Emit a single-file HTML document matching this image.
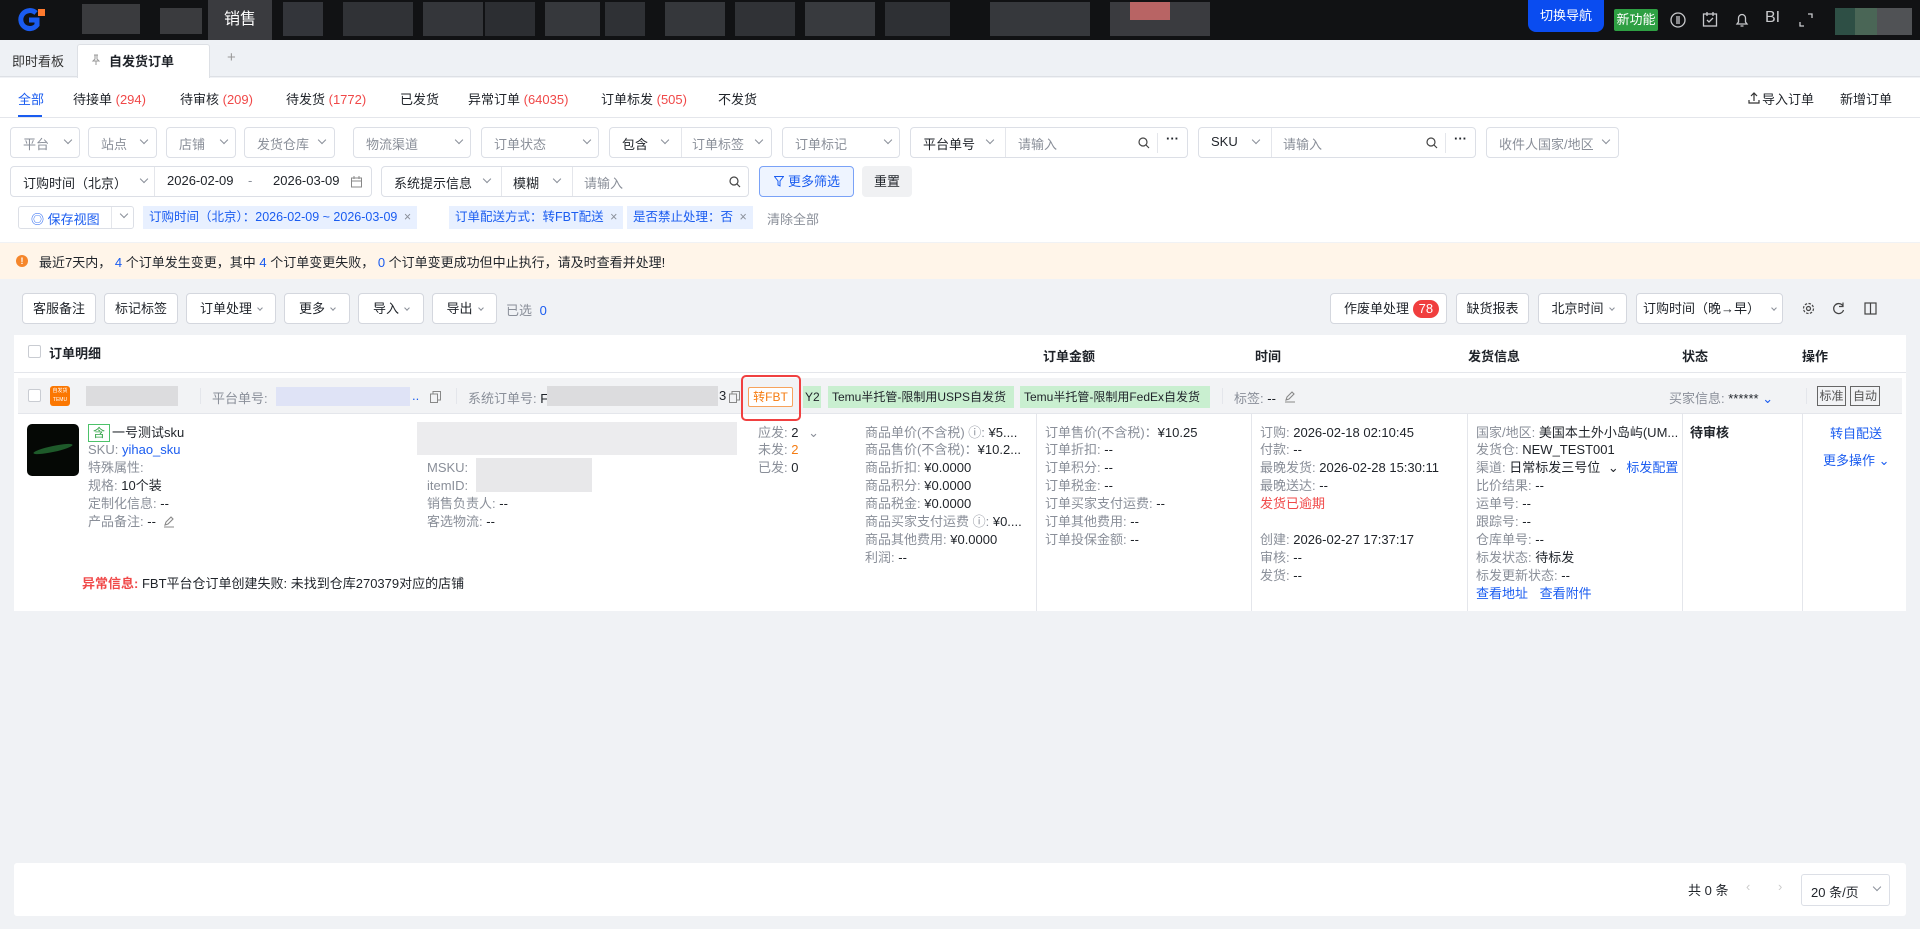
<!DOCTYPE html>
<html><head><meta charset="utf-8">
<style>
*{box-sizing:border-box;margin:0;padding:0}
body{width:1920px;height:929px;overflow:hidden;background:#f0f2f5;font-family:"Liberation Sans","Noto Sans CJK SC",sans-serif;font-size:13px;color:#1f2329;position:relative}
.a{position:absolute;white-space:nowrap}
.box{position:absolute;border:1px solid #dcdfe6;border-radius:4px;background:#fff;height:31px}
.ph{color:#8a8f99}
.g{color:#8a8f99}
.b{color:#1a5cf0}
.r{color:#f04848}
.btn{position:absolute;border:1px solid #d4d7de;border-radius:4px;background:#fff;height:31px;line-height:29px;text-align:center;font-size:13px;white-space:nowrap}
.tag{position:absolute;background:#e8f0ff;color:#1a5cf0;height:23px;line-height:23px;padding:0 6px;font-size:12.5px;white-space:nowrap}
.chev{display:inline-block;width:6px;height:6px;border-right:1.2px solid #8a8f99;border-bottom:1.2px solid #8a8f99;transform:rotate(45deg);margin-left:6px;position:relative;top:-3px}
.sep{position:absolute;width:1px;background:#e4e6eb}
.blur{position:absolute;background:#d8d9dc}
.gtag{position:absolute;background:#c9efd0;color:#1f2329;height:22px;line-height:22px;padding:0 4px;font-size:12px;white-space:nowrap;overflow:hidden}
.ln{position:absolute;line-height:18px;font-size:13px;white-space:nowrap}
.mg{position:absolute}
</style></head><body>
<!-- top bar -->
<div class="a" style="left:0;top:0;width:1920px;height:40px;background:#111214"></div>
<svg class="a" style="left:18px;top:8px" width="28" height="24" viewBox="0 0 28 24"><path d="M18 5 A9 9 0 1 0 19 17 L19 12 L11 12" fill="none" stroke="#1a5cf0" stroke-width="5"/><rect x="20" y="1" width="7" height="7" fill="#ff7a2e"/></svg>
<div class="blur" style="left:82px;top:4px;width:58px;height:30px;background:#3a3b3e"></div>
<div class="blur" style="left:160px;top:8px;width:42px;height:26px;background:#3a3b3e"></div>
<div class="a" style="left:208px;top:0;width:64px;height:40px;background:#3a3b3f;color:#fff;font-size:16px;line-height:40px;text-align:center">销售</div>
<div class="blur" style="left:283px;top:2px;width:40px;height:34px;background:#33353a"></div>
<div class="blur" style="left:343px;top:2px;width:70px;height:34px;background:#303236"></div>
<div class="blur" style="left:423px;top:2px;width:60px;height:34px;background:#34363a"></div>
<div class="blur" style="left:485px;top:2px;width:50px;height:34px;background:#2c2e32"></div>
<div class="blur" style="left:545px;top:2px;width:55px;height:34px;background:#36383c"></div>
<div class="blur" style="left:605px;top:2px;width:40px;height:34px;background:#2f3135"></div>
<div class="blur" style="left:665px;top:2px;width:60px;height:34px;background:#35373b"></div>
<div class="blur" style="left:735px;top:2px;width:60px;height:34px;background:#303236"></div>
<div class="blur" style="left:805px;top:2px;width:70px;height:34px;background:#383a3e"></div>
<div class="blur" style="left:885px;top:2px;width:65px;height:34px;background:#2e3034"></div>
<div class="blur" style="left:990px;top:2px;width:100px;height:34px;background:#36383c"></div>
<div class="blur" style="left:1110px;top:2px;width:100px;height:34px;background:#3a3b3f"></div>
<div class="blur" style="left:1130px;top:2px;width:40px;height:18px;background:#b86464"></div>
<div class="a" style="left:1528px;top:0;width:76px;height:32px;background:#0a4cf0;color:#fff;border-radius:0 0 8px 8px;text-align:center;line-height:32px;font-size:13px">切换导航</div>
<div class="a" style="left:1614px;top:9px;width:44px;height:22px;background:#2ea043;color:#fff;border-radius:2px;text-align:center;line-height:22px;font-size:13px">新功能</div>
<svg class="a" style="left:1670px;top:12px" width="16" height="16"><circle cx="8" cy="8" r="7" fill="none" stroke="#c8c9cc" stroke-width="1.3"/><path d="M7 4v8M9 4v8" stroke="#c8c9cc" stroke-width="1.3"/></svg>
<svg class="a" style="left:1702px;top:11px" width="16" height="17"><rect x="1.5" y="3" width="13" height="12" fill="none" stroke="#c8c9cc" stroke-width="1.3"/><path d="M5 1v4M11 1v4M5 9l2 2 4-4" fill="none" stroke="#c8c9cc" stroke-width="1.3"/></svg>
<svg class="a" style="left:1734px;top:11px" width="16" height="17"><path d="M3 13h10l-1.5-2V7a3.5 3.5 0 0 0-7 0v4zM6.5 15h3" fill="none" stroke="#c8c9cc" stroke-width="1.3"/></svg>
<div class="a" style="left:1765px;top:9px;color:#c8c9cc;font-size:16px">BI</div>
<svg class="a" style="left:1799px;top:13px" width="14" height="14"><path d="M9 1h4v4M5 13H1V9" fill="none" stroke="#c8c9cc" stroke-width="1.3"/></svg>
<div class="blur" style="left:1835px;top:8px;width:20px;height:27px;background:#2e4f45"></div>
<div class="blur" style="left:1855px;top:8px;width:22px;height:27px;background:#4a6656"></div>
<div class="blur" style="left:1877px;top:8px;width:35px;height:27px;background:#505255"></div>
<!-- tab bar -->
<div class="a" style="left:0;top:40px;width:1920px;height:37px;background:#eef1f5;border-bottom:1px solid #dde0e5"></div>
<div class="a" style="left:12px;top:51px;font-size:13px;color:#333">即时看板</div>
<div class="a" style="left:77px;top:44px;width:133px;height:34px;background:#fff;border:1px solid #dde0e5;border-bottom:none;border-radius:3px 3px 0 0"></div>
<svg class="a" style="left:91px;top:54px" width="10" height="12"><path d="M3 1h4M4 1v4L2 7h6L6 5V1M5 7v4" fill="none" stroke="#999" stroke-width="1"/></svg>
<div class="a" style="left:109px;top:51px;font-size:13px;font-weight:bold">自发货订单</div>
<div class="a" style="left:227px;top:49px;font-size:15px;color:#999">+</div>
<!-- status tabs -->
<div class="a" style="left:0;top:78px;width:1920px;height:40px;background:#fff;border-bottom:1px solid #e4e6eb"></div>
<div class="a" style="left:18px;top:89px;color:#1a5cf0">全部</div>
<div class="a" style="left:18px;top:115px;width:24px;height:2px;background:#1a5cf0"></div>
<div class="a" style="left:73px;top:89px">待接单 <span class="r">(294)</span></div>
<div class="a" style="left:180px;top:89px">待审核 <span class="r">(209)</span></div>
<div class="a" style="left:286px;top:89px">待发货 <span class="r">(1772)</span></div>
<div class="a" style="left:400px;top:89px">已发货</div>
<div class="a" style="left:468px;top:89px">异常订单 <span class="r">(64035)</span></div>
<div class="a" style="left:601px;top:89px">订单标发 <span class="r">(505)</span></div>
<div class="a" style="left:718px;top:89px">不发货</div>
<svg class="a" style="left:1748px;top:91px" width="12" height="13"><path d="M6 10V2M3 5l3-3 3 3M1 9v3h10V9" fill="none" stroke="#333" stroke-width="1.2"/></svg>
<div class="a" style="left:1762px;top:89px">导入订单</div>
<div class="a" style="left:1840px;top:89px">新增订单</div>
<!-- filter area bg -->
<div class="a" style="left:0;top:118px;width:1920px;height:124px;background:#fff"></div>
<div class="box" style="left:10px;top:127px;width:70px"><span class="a ph" style="left:12px;top:6px">平台</span><span class="a" style="left:48px;top:6px"><i class="chev"></i></span></div>
<div class="box" style="left:88px;top:127px;width:69px"><span class="a ph" style="left:12px;top:6px">站点</span><span class="a" style="left:46px;top:6px"><i class="chev"></i></span></div>
<div class="box" style="left:166px;top:127px;width:70px"><span class="a ph" style="left:12px;top:6px">店铺</span><span class="a" style="left:48px;top:6px"><i class="chev"></i></span></div>
<div class="box" style="left:244px;top:127px;width:91px"><span class="a ph" style="left:12px;top:6px">发货仓库</span><span class="a" style="left:68px;top:6px"><i class="chev"></i></span></div>
<div class="box" style="left:353px;top:127px;width:118px"><span class="a ph" style="left:12px;top:6px">物流渠道</span><span class="a" style="left:96px;top:6px"><i class="chev"></i></span></div>
<div class="box" style="left:481px;top:127px;width:118px"><span class="a ph" style="left:12px;top:6px">订单状态</span><span class="a" style="left:96px;top:6px"><i class="chev"></i></span></div>
<div class="box" style="left:609px;top:127px;width:163px"><span class="a" style="left:12px;top:6px">包含</span><span class="a" style="left:46px;top:6px"><i class="chev"></i></span><div class="sep" style="left:71px;top:0;height:29px"></div><span class="a ph" style="left:82px;top:6px">订单标签</span><span class="a" style="left:140px;top:6px"><i class="chev"></i></span></div>
<div class="box" style="left:782px;top:127px;width:118px"><span class="a ph" style="left:12px;top:6px">订单标记</span><span class="a" style="left:96px;top:6px"><i class="chev"></i></span></div>
<div class="box" style="left:910px;top:127px;width:278px"><span class="a" style="left:12px;top:6px">平台单号</span><span class="a" style="left:70px;top:6px"><i class="chev"></i></span><div class="sep" style="left:94px;top:0;height:29px"></div><span class="a ph" style="left:107px;top:6px">请输入</span><svg class="mg" style="left:227px;top:9px" width="12" height="12"><circle cx="5" cy="5" r="4" fill="none" stroke="#444" stroke-width="1.2"/><path d="M8 8l3 3" stroke="#444" stroke-width="1.2"/></svg><div class="sep" style="left:246px;top:5px;height:20px"></div><span class="a" style="left:255px;top:3px;font-weight:bold">···</span></div>
<div class="box" style="left:1198px;top:127px;width:278px"><span class="a" style="left:12px;top:6px">SKU</span><span class="a" style="left:48px;top:6px"><i class="chev"></i></span><div class="sep" style="left:72px;top:0;height:29px"></div><span class="a ph" style="left:84px;top:6px">请输入</span><svg class="mg" style="left:227px;top:9px" width="12" height="12"><circle cx="5" cy="5" r="4" fill="none" stroke="#444" stroke-width="1.2"/><path d="M8 8l3 3" stroke="#444" stroke-width="1.2"/></svg><div class="sep" style="left:246px;top:5px;height:20px"></div><span class="a" style="left:255px;top:3px;font-weight:bold">···</span></div>
<div class="box" style="left:1486px;top:127px;width:133px"><span class="a ph" style="left:12px;top:6px">收件人国家/地区</span><span class="a" style="left:110px;top:6px"><i class="chev"></i></span></div>
<!-- row 2 -->
<div class="box" style="left:10px;top:166px;width:362px"><span class="a" style="left:12px;top:6px">订购时间（北京）</span><span class="a" style="left:124px;top:6px"><i class="chev"></i></span><div class="sep" style="left:143px;top:0;height:29px"></div><span class="a" style="left:156px;top:6px">2026-02-09</span><span class="a g" style="left:237px;top:6px">-</span><span class="a" style="left:262px;top:6px">2026-03-09</span><svg class="mg" style="left:340px;top:9px" width="11" height="12"><rect x="0.5" y="2" width="10" height="9" fill="none" stroke="#888"/><path d="M3 0v3M8 0v3M0 5h11" stroke="#888"/></svg></div>
<div class="box" style="left:381px;top:166px;width:368px"><span class="a" style="left:12px;top:6px">系统提示信息</span><span class="a" style="left:96px;top:6px"><i class="chev"></i></span><div class="sep" style="left:119px;top:0;height:29px"></div><span class="a" style="left:131px;top:6px">模糊</span><span class="a" style="left:166px;top:6px"><i class="chev"></i></span><div class="sep" style="left:190px;top:0;height:29px"></div><span class="a ph" style="left:202px;top:6px">请输入</span><svg class="mg" style="left:347px;top:9px" width="12" height="12"><circle cx="5" cy="5" r="4" fill="none" stroke="#444" stroke-width="1.2"/><path d="M8 8l3 3" stroke="#444" stroke-width="1.2"/></svg></div>
<div class="a" style="left:759px;top:166px;width:95px;height:31px;border:1px solid #7aa2f7;background:#eef4ff;border-radius:4px;color:#1a5cf0;line-height:29px;padding-left:14px"><svg style="vertical-align:-1px;margin-right:4px" width="10" height="11"><path d="M0.5 0.5h9L6 5v5L4 9V5z" fill="none" stroke="#1a5cf0"/></svg>更多筛选</div>
<div class="a" style="left:862px;top:166px;width:50px;height:31px;background:#f0f1f3;border-radius:4px;line-height:31px;text-align:center">重置</div>
<!-- row 3 -->
<div class="a" style="left:18px;top:206px;width:116px;height:23px;border:1px solid #dcdfe6;border-radius:3px;background:#fff"><span class="a b" style="left:12px;top:2px">◎ 保存视图</span><div class="sep" style="left:92px;top:0;height:21px"></div><span class="a" style="left:96px;top:1px"><i class="chev"></i></span></div>
<div class="tag" style="left:143px;top:206px">订购时间（北京）：2026-02-09 ~ 2026-03-09 <span class="g" style="margin-left:3px">×</span></div>
<div class="tag" style="left:449px;top:206px">订单配送方式：转FBT配送 <span class="g" style="margin-left:3px">×</span></div>
<div class="tag" style="left:627px;top:206px">是否禁止处理：否 <span class="g" style="margin-left:3px">×</span></div>
<div class="a g" style="left:767px;top:209px">清除全部</div>
<!-- warning -->
<div class="a" style="left:0;top:243px;width:1920px;height:36px;background:#fff5e9"></div>
<div class="a" style="left:16px;top:255px;width:12px;height:12px;border-radius:50%;background:#f5862b;color:#fff;font-size:9px;line-height:12px;text-align:center;font-weight:bold">!</div>
<div class="a" style="left:39px;top:252px">最近7天内，<span class="b"> 4 </span>个订单发生变更，其中<span class="b"> 4 </span>个订单变更失败，<span class="b"> 0 </span>个订单变更成功但中止执行，请及时查看并处理!</div>
<!-- toolbar -->
<div class="btn" style="left:22px;top:293px;width:74px">客服备注</div>
<div class="btn" style="left:104px;top:293px;width:74px">标记标签</div>
<div class="btn" style="left:186px;top:293px;width:90px">订单处理<i class="chev" style="width:4px;height:4px"></i></div>
<div class="btn" style="left:284px;top:293px;width:66px">更多<i class="chev" style="width:4px;height:4px"></i></div>
<div class="btn" style="left:358px;top:293px;width:66px">导入<i class="chev" style="width:4px;height:4px"></i></div>
<div class="btn" style="left:432px;top:293px;width:65px">导出<i class="chev" style="width:4px;height:4px"></i></div>
<div class="a" style="left:506px;top:300px"><span class="g">已选</span> <span class="b" style="margin-left:4px">0</span></div>
<div class="btn" style="left:1330px;top:293px;width:117px;text-align:left;padding-left:13px">作废单处理 <span style="display:inline-block;background:#f03e3e;color:#fff;border-radius:10px;padding:0 6px;line-height:18px">78</span></div>
<div class="btn" style="left:1456px;top:293px;width:73px">缺货报表</div>
<div class="btn" style="left:1538px;top:293px;width:89px">北京时间<i class="chev" style="width:4px;height:4px"></i></div>
<div class="btn" style="left:1636px;top:293px;width:147px">订购时间（晚→早）<i class="chev" style="width:4px;height:4px;margin-left:12px"></i></div>
<svg class="a" style="left:1802px;top:302px" width="13" height="13"><circle cx="6.5" cy="6.5" r="2" fill="none" stroke="#444" stroke-width="1.2"/><circle cx="6.5" cy="6.5" r="5" fill="none" stroke="#444" stroke-width="1.2" stroke-dasharray="2.5 1.4"/></svg>
<svg class="a" style="left:1832px;top:302px" width="13" height="13"><path d="M11 4A5 5 0 1 0 11.5 8" fill="none" stroke="#444" stroke-width="1.3"/><path d="M11 0.5v4h-4" fill="none" stroke="#444" stroke-width="1.2"/></svg>
<svg class="a" style="left:1864px;top:302px" width="13" height="13"><rect x="1" y="1" width="11" height="11" fill="none" stroke="#444" stroke-width="1.2"/><path d="M6.5 1v11" stroke="#444" stroke-width="1.2"/></svg>
<!-- table card -->
<div class="a" style="left:14px;top:335px;width:1892px;height:276px;background:#fff"></div>
<div class="a" style="left:14px;top:372px;width:1892px;height:1px;background:#e4e6eb"></div>
<div class="a" style="left:28px;top:345px;width:13px;height:13px;border:1px solid #c9ccd2;border-radius:2px;background:#fff"></div>
<div class="a" style="left:49px;top:343px;font-weight:bold">订单明细</div>
<div class="a" style="left:1043px;top:346px;font-weight:bold">订单金额</div>
<div class="a" style="left:1255px;top:346px;font-weight:bold">时间</div>
<div class="a" style="left:1468px;top:346px;font-weight:bold">发货信息</div>
<div class="a" style="left:1682px;top:346px;font-weight:bold">状态</div>
<div class="a" style="left:1802px;top:346px;font-weight:bold">操作</div>
<!-- order header row -->
<div class="a" style="left:18px;top:378px;width:1884px;height:36px;background:#f2f3f5;border-bottom:1px solid #e4e6eb"></div>
<div class="a" style="left:28px;top:389px;width:13px;height:13px;border:1px solid #c9ccd2;border-radius:2px;background:#fff"></div>
<div class="a" style="left:50px;top:386px;width:20px;height:20px;background:#fb7701;border-radius:3px;color:#fff;font-size:5px;line-height:9px;text-align:center;padding-top:1px">自发货<br>TEMU</div>
<div class="blur" style="left:86px;top:386px;width:92px;height:20px;background:#dcdcde"></div>
<div class="sep" style="left:200px;top:388px;height:16px"></div>
<div class="a g" style="left:212px;top:388px">平台单号:</div>
<div class="blur" style="left:276px;top:387px;width:134px;height:19px;background:#dfe3f6"></div>
<div class="a b" style="left:412px;top:388px">..</div>
<svg class="a" style="left:430px;top:391px" width="11" height="12"><rect x="0.5" y="3" width="7" height="8.5" fill="none" stroke="#888"/><path d="M3 3V0.5h7.5V9H8" fill="none" stroke="#888"/></svg>
<div class="sep" style="left:456px;top:388px;height:16px"></div>
<div class="a g" style="left:468px;top:388px">系统订单号: <span style="color:#1f2329">F</span></div>
<div class="blur" style="left:547px;top:386px;width:171px;height:20px;background:#dcdcde"></div>
<div class="a" style="left:719px;top:388px">3</div>
<svg class="a" style="left:729px;top:391px" width="11" height="12"><rect x="0.5" y="3" width="7" height="8.5" fill="none" stroke="#888"/><path d="M3 3V0.5h7.5V9H8" fill="none" stroke="#888"/></svg>
<div class="a" style="left:741px;top:375px;width:60px;height:46px;border:2.5px solid #f04040;border-radius:5px"></div>
<div class="a" style="left:748px;top:387px;width:45px;height:20px;border:1px solid #f7a35c;color:#f57c12;background:#fff;line-height:18px;text-align:center;border-radius:2px;font-size:12px">转FBT</div>
<div class="gtag" style="left:803px;top:386px;width:18px;padding:0 2px">Y2</div>
<div class="gtag" style="left:828px;top:386px;width:186px">Temu半托管-限制用USPS自发货</div>
<div class="gtag" style="left:1020px;top:386px;width:190px">Temu半托管-限制用FedEx自发货</div>
<div class="sep" style="left:1222px;top:388px;height:16px"></div>
<div class="a" style="left:1234px;top:388px"><span class="g">标签:</span> --</div>
<svg class="a" style="left:1284px;top:390px" width="12" height="13"><path d="M2 10l1-3 5-5 2 2-5 5zM1 12h10" fill="none" stroke="#888" stroke-width="1.1"/></svg>
<div class="a g" style="left:1669px;top:388px">买家信息: <span style="color:#1f2329">******</span> <span class="b">⌄</span></div>
<div class="sep" style="left:1806px;top:388px;height:16px"></div>
<div class="a" style="left:1817px;top:386px;width:29px;height:20px;border:1px solid #666;color:#555;line-height:18px;text-align:center;font-size:12px">标准</div>
<div class="a" style="left:1850px;top:386px;width:30px;height:20px;border:1px solid #666;color:#555;line-height:18px;text-align:center;font-size:12px">自动</div>
<!-- column dividers -->
<div class="sep" style="left:1036px;top:414px;height:197px"></div>
<div class="sep" style="left:1251px;top:414px;height:197px"></div>
<div class="sep" style="left:1467px;top:414px;height:197px"></div>
<div class="sep" style="left:1682px;top:414px;height:197px"></div>
<div class="sep" style="left:1802px;top:414px;height:197px"></div>
<!-- product -->
<div class="a" style="left:27px;top:424px;width:52px;height:52px;background:#050805;border-radius:5px;overflow:hidden"><div style="position:absolute;left:6px;top:22px;width:40px;height:6px;background:#1e5a2a;transform:rotate(-12deg);border-radius:50%"></div></div>
<div class="a" style="left:88px;top:424px;width:22px;height:18px;border:1px solid #4cc26a;color:#2ea043;font-size:12px;line-height:16px;text-align:center">含</div>
<div class="ln" style="left:112px;top:424px">一号测试sku</div>
<div class="ln" style="left:88px;top:441px"><span class="g">SKU:</span> <span class="b">yihao_sku</span></div>
<div class="ln g" style="left:88px;top:459px">特殊属性:</div>
<div class="ln" style="left:88px;top:477px"><span class="g">规格:</span> 10个装</div>
<div class="ln" style="left:88px;top:495px"><span class="g">定制化信息:</span> --</div>
<div class="ln" style="left:88px;top:513px"><span class="g">产品备注:</span> --</div>
<svg class="a" style="left:163px;top:515px" width="12" height="13"><path d="M2 10l1-3 5-5 2 2-5 5zM1 12h10" fill="none" stroke="#888" stroke-width="1.1"/></svg>
<div class="blur" style="left:417px;top:422px;width:320px;height:33px;background:#ececee"></div>
<div class="ln" style="left:427px;top:459px"><span class="g">MSKU:</span></div>
<div class="blur" style="left:476px;top:458px;width:116px;height:34px;background:#e8e8ea"></div>
<div class="ln" style="left:427px;top:477px"><span class="g">itemID:</span></div>
<div class="ln" style="left:427px;top:495px"><span class="g">销售负责人:</span> --</div>
<div class="ln" style="left:427px;top:513px"><span class="g">客选物流:</span> --</div>
<div class="ln" style="left:758px;top:424px"><span class="g">应发:</span> 2 <span class="g" style="margin-left:6px">⌄</span></div>
<div class="ln" style="left:758px;top:441px"><span class="g">未发:</span> <span style="color:#f57c12">2</span></div>
<div class="ln" style="left:758px;top:459px"><span class="g">已发:</span> 0</div>
<div class="ln" style="left:865px;top:424px"><span class="g">商品单价(不含税) ⓘ:</span> ¥5....</div>
<div class="ln" style="left:865px;top:441px"><span class="g">商品售价(不含税)：</span>¥10.2...</div>
<div class="ln" style="left:865px;top:459px"><span class="g">商品折扣:</span> ¥0.0000</div>
<div class="ln" style="left:865px;top:477px"><span class="g">商品积分:</span> ¥0.0000</div>
<div class="ln" style="left:865px;top:495px"><span class="g">商品税金:</span> ¥0.0000</div>
<div class="ln" style="left:865px;top:513px"><span class="g">商品买家支付运费 ⓘ:</span> ¥0....</div>
<div class="ln" style="left:865px;top:531px"><span class="g">商品其他费用:</span> ¥0.0000</div>
<div class="ln" style="left:865px;top:549px"><span class="g">利润:</span> --</div>
<div class="ln" style="left:1045px;top:424px"><span class="g">订单售价(不含税)：</span>¥10.25</div>
<div class="ln" style="left:1045px;top:441px"><span class="g">订单折扣:</span> --</div>
<div class="ln" style="left:1045px;top:459px"><span class="g">订单积分:</span> --</div>
<div class="ln" style="left:1045px;top:477px"><span class="g">订单税金:</span> --</div>
<div class="ln" style="left:1045px;top:495px"><span class="g">订单买家支付运费:</span> --</div>
<div class="ln" style="left:1045px;top:513px"><span class="g">订单其他费用:</span> --</div>
<div class="ln" style="left:1045px;top:531px"><span class="g">订单投保金额:</span> --</div>
<div class="ln" style="left:1260px;top:424px"><span class="g">订购:</span> 2026-02-18 02:10:45</div>
<div class="ln" style="left:1260px;top:441px"><span class="g">付款:</span> --</div>
<div class="ln" style="left:1260px;top:459px"><span class="g">最晚发货:</span> 2026-02-28 15:30:11</div>
<div class="ln" style="left:1260px;top:477px"><span class="g">最晚送达:</span> --</div>
<div class="ln r" style="left:1260px;top:495px">发货已逾期</div>
<div class="ln" style="left:1260px;top:531px"><span class="g">创建:</span> 2026-02-27 17:37:17</div>
<div class="ln" style="left:1260px;top:549px"><span class="g">审核:</span> --</div>
<div class="ln" style="left:1260px;top:567px"><span class="g">发货:</span> --</div>
<div class="ln" style="left:1476px;top:424px"><span class="g">国家/地区:</span> 美国本土外小岛屿(UM...</div>
<div class="ln" style="left:1476px;top:441px"><span class="g">发货仓:</span> NEW_TEST001</div>
<div class="ln" style="left:1476px;top:459px"><span class="g">渠道:</span> 日常标发三号位 <span style="margin:0 4px">⌄</span> <span class="b">标发配置</span></div>
<div class="ln" style="left:1476px;top:477px"><span class="g">比价结果:</span> --</div>
<div class="ln" style="left:1476px;top:495px"><span class="g">运单号:</span> --</div>
<div class="ln" style="left:1476px;top:513px"><span class="g">跟踪号:</span> --</div>
<div class="ln" style="left:1476px;top:531px"><span class="g">仓库单号:</span> --</div>
<div class="ln" style="left:1476px;top:549px"><span class="g">标发状态:</span> 待标发</div>
<div class="ln" style="left:1476px;top:567px"><span class="g">标发更新状态:</span> --</div>
<div class="ln b" style="left:1476px;top:585px">查看地址 <span style="margin-left:8px">查看附件</span></div>
<div class="ln" style="left:1690px;top:424px;font-weight:bold">待审核</div>
<div class="ln b" style="left:1830px;top:425px">转自配送</div>
<div class="ln b" style="left:1823px;top:452px">更多操作 ⌄</div>
<div class="ln" style="left:82px;top:575px"><span class="r" style="font-weight:bold">异常信息:</span> FBT平台仓订单创建失败: 未找到仓库270379对应的店铺</div>
<!-- pagination -->
<div class="a" style="left:14px;top:863px;width:1892px;height:53px;background:#fff;border-radius:3px"></div>
<div class="a" style="left:1688px;top:880px">共 0 条</div>
<div class="a" style="left:1746px;top:879px;color:#ccc">‹</div>
<div class="a" style="left:1778px;top:879px;color:#ccc">›</div>
<div class="a" style="left:1801px;top:874px;width:89px;height:32px;border:1px solid #dcdfe6;border-radius:3px;background:#fff"><span class="a" style="left:9px;top:7px">20 条/页</span><span class="a" style="left:66px;top:6px"><i class="chev"></i></span></div>
</body></html>
